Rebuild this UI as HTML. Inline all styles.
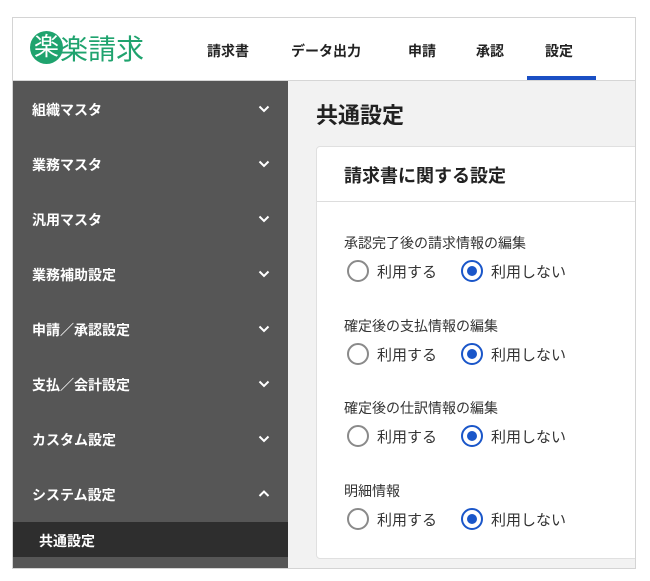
<!DOCTYPE html>
<html><head><meta charset="utf-8"><style>
*{margin:0;padding:0;box-sizing:border-box}
html,body{width:650px;height:581px;overflow:hidden}
body{background:#fff;font-family:"Liberation Sans","Noto Sans CJK JP",sans-serif;position:relative}
.frame{position:absolute;left:12px;top:17px;width:624px;height:552px;border:1px solid #d4d4d4;background:#f2f2f2;overflow:hidden}
.hdr{position:absolute;left:0;top:0;width:100%;height:63px;background:#fff;border-bottom:1px solid #d6d6d6}
.logo-c{position:absolute;left:17px;top:13px;width:33px;height:33px;border-radius:50%;background:#1fa36e;color:#fff;font-size:25px;line-height:33px;text-align:center}
.logo-t{position:absolute;left:47px;top:10px;font-size:28px;color:#1fa36e}
.nav{position:absolute;top:23px;font-size:14px;font-weight:bold;color:#222}
.ul{position:absolute;left:514px;top:58px;width:69px;height:4px;background:#1a4fc4}
.side{position:absolute;left:0;top:63px;width:275px;height:489px;background:#565656}
.si{position:absolute;left:19px;font-size:14px;font-weight:bold;color:#fff}
.chev{position:absolute;left:245px;width:12px;height:12px}
.act{position:absolute;left:0;top:441px;width:275px;height:35px;background:#2e2e2e}
.title{position:absolute;left:303px;top:80px;font-size:22px;font-weight:bold;color:#222}
.card{position:absolute;left:303px;top:128px;width:330px;height:413px;background:#fff;border:1px solid #e0e0e0;border-radius:4px}
.ch{position:absolute;left:0;top:0;width:100%;height:55px;border-bottom:1px solid #ddd}
.ch span{position:absolute;left:27px;top:15px;font-size:18px;font-weight:bold;color:#222}
.lbl{position:absolute;left:27px;font-size:14px;color:#333}
.r{position:absolute;width:22px;height:22px;border-radius:50%;border:2px solid #8a8a8a;background:#fff}
.r.on{border-color:#1a56c9}
.r.on::after{content:"";position:absolute;left:4px;top:4px;width:10px;height:10px;border-radius:50%;background:#1a56c9}
.rt{position:absolute;font-size:15px;color:#333}
</style></head><body>
<div class="frame">
<div class="hdr">
<div class="logo-c">楽</div>
<div class="logo-t">楽請求</div>
<div class="nav" style="left:194px">請求書</div>
<div class="nav" style="left:278px">データ出力</div>
<div class="nav" style="left:395px">申請</div>
<div class="nav" style="left:463px">承認</div>
<div class="nav" style="left:532px">設定</div>
<div class="ul"></div>
</div>
<div class="side">
<div class="act"></div>
<div class="si" style="top:19px">組織マスタ</div>
<div class="si" style="top:74px">業務マスタ</div>
<div class="si" style="top:129px">汎用マスタ</div>
<div class="si" style="top:184px">業務補助設定</div>
<div class="si" style="top:239px">申請／承認設定</div>
<div class="si" style="top:294px">支払／会計設定</div>
<div class="si" style="top:349px">カスタム設定</div>
<div class="si" style="top:404px">システム設定</div>
<div class="si" style="top:450px;left:26px">共通設定</div>
<svg class="chev" style="top:22px" viewBox="0 0 12 12"><path d="M1.5 3.5L6 8l4.5-4.5" stroke="#fff" stroke-width="2" fill="none"/></svg>
<svg class="chev" style="top:77px" viewBox="0 0 12 12"><path d="M1.5 3.5L6 8l4.5-4.5" stroke="#fff" stroke-width="2" fill="none"/></svg>
<svg class="chev" style="top:132px" viewBox="0 0 12 12"><path d="M1.5 3.5L6 8l4.5-4.5" stroke="#fff" stroke-width="2" fill="none"/></svg>
<svg class="chev" style="top:187px" viewBox="0 0 12 12"><path d="M1.5 3.5L6 8l4.5-4.5" stroke="#fff" stroke-width="2" fill="none"/></svg>
<svg class="chev" style="top:242px" viewBox="0 0 12 12"><path d="M1.5 3.5L6 8l4.5-4.5" stroke="#fff" stroke-width="2" fill="none"/></svg>
<svg class="chev" style="top:297px" viewBox="0 0 12 12"><path d="M1.5 3.5L6 8l4.5-4.5" stroke="#fff" stroke-width="2" fill="none"/></svg>
<svg class="chev" style="top:352px" viewBox="0 0 12 12"><path d="M1.5 3.5L6 8l4.5-4.5" stroke="#fff" stroke-width="2" fill="none"/></svg>
<svg class="chev" style="top:407px" viewBox="0 0 12 12"><path d="M1.5 8L6 3.5 10.5 8" stroke="#fff" stroke-width="2" fill="none"/></svg>
</div>
<div class="title">共通設定</div>
<div class="card">
<div class="ch"><span>請求書に関する設定</span></div>
<div class="lbl" style="top:86px">承認完了後の請求情報の編集</div>
<div class="r" style="left:30px;top:113px"></div><div class="rt" style="left:60px;top:114px">利用する</div>
<div class="r on" style="left:144px;top:113px"></div><div class="rt" style="left:174px;top:114px">利用しない</div>
<div class="lbl" style="top:169px">確定後の支払情報の編集</div>
<div class="r" style="left:30px;top:196px"></div><div class="rt" style="left:60px;top:197px">利用する</div>
<div class="r on" style="left:144px;top:196px"></div><div class="rt" style="left:174px;top:197px">利用しない</div>
<div class="lbl" style="top:251px">確定後の仕訳情報の編集</div>
<div class="r" style="left:30px;top:278px"></div><div class="rt" style="left:60px;top:279px">利用する</div>
<div class="r on" style="left:144px;top:278px"></div><div class="rt" style="left:174px;top:279px">利用しない</div>
<div class="lbl" style="top:334px">明細情報</div>
<div class="r" style="left:30px;top:361px"></div><div class="rt" style="left:60px;top:362px">利用する</div>
<div class="r on" style="left:144px;top:361px"></div><div class="rt" style="left:174px;top:362px">利用しない</div>
</div>
</div>
</body></html>
